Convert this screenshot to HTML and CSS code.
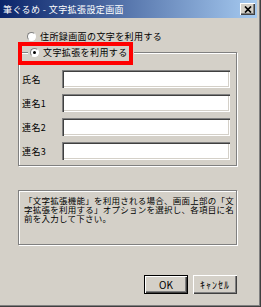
FILE: index.html
```html
<!DOCTYPE html>
<html lang="ja">
<head>
    <meta charset="UTF-8">
    <meta name="viewport" content="width=device-width, initial-scale=1.0">
    <title>筆ぐるめ - 文字拡張設定画面</title>
    <link rel="stylesheet" href="styles.css">
</head>
<body>
    <div class="window">
        <div class="titlebar">
            <span class="title">筆ぐるめ - 文字拡張設定画面</span>
            <span class="close-button">
                <svg width="8" height="7" viewBox="0 0 8 7"><path d="M1 0.5L7 6.5M7 0.5L1 6.5" stroke="#000" stroke-width="1.7" fill="none"/></svg>
            </span>
        </div>
        <div class="content">
            <div class="radio-row"><span class="radio"></span>住所録画面の文字を利用する</div>
            <fieldset class="group">
                <legend class="radio-row legend"><span class="radio checked"></span>文字拡張を利用する</legend>
                <div class="fields">
                    <span class="field-label">氏名</span>
                    <span class="text-box"></span>
                    <span class="field-label">連名1</span>
                    <span class="text-box"></span>
                    <span class="field-label">連名2</span>
                    <span class="text-box"></span>
                    <span class="field-label">連名3</span>
                    <span class="text-box"></span>
                </div>
            </fieldset>
            <div class="note">「文字拡張機能」を利用される場合、画面上部の「文<br>字拡張を利用する」オプションを選択し、各項目に名<br>前を入力して下さい。</div>
            <div class="buttons">
                <button class="dialog-button default-button">OK</button>
                <button class="dialog-button">ｷｬﾝｾﾙ</button>
            </div>
        </div>
        <div class="highlight"></div>
    </div>
</body>
</html>
```

FILE: styles.css
```css
body {
    margin: 0;
    font-family: "Noto Sans CJK JP", sans-serif;
    font-size: 9px;
    letter-spacing: 0.4px;
    color: #000;
}
.window {
    position: relative;
    width: 261px;
    height: 307px;
    box-sizing: border-box;
    padding: 0 4px 4px 0;
    background-color: #d4d0c8;
    box-shadow: inset -1px -1px #404040, inset -2px -2px #808080;
    overflow: hidden;
}
.titlebar {
    height: 18px;
    display: flex;
    align-items: center;
    justify-content: space-between;
    padding: 0 2px 0 3px;
    background: linear-gradient(to right, #0a246a, #a6caf0);
    color: #fff;
}
.title {
    white-space: nowrap;
}
.close-button {
    width: 15px;
    height: 12px;
    display: flex;
    align-items: center;
    justify-content: center;
    background-color: #d4d0c8;
    box-shadow: inset 1px 1px #fff, inset -1px -1px #404040, inset -2px -2px #808080;
}
.content {
    padding: 0 20px 0 18px;
}
.radio-row {
    display: flex;
    align-items: center;
    gap: 4px;
    height: 12px;
    white-space: nowrap;
}
.content > .radio-row {
    margin-top: 12px;
    padding-left: 9px;
}
.radio {
    width: 9px;
    height: 9px;
    box-sizing: border-box;
    border-radius: 50%;
    border: 1px solid;
    border-color: #808080 #fff #fff #808080;
    background-color: #fff;
    display: flex;
    align-items: center;
    justify-content: center;
}
.radio.checked::after {
    content: "";
    width: 3px;
    height: 3px;
    border-radius: 50%;
    background-color: #000;
}
.group {
    margin: 4px 0 0 0;
    padding: 11px 6px 5px 3px;
    min-inline-size: 0;
    border: 1px solid #808080;
    box-shadow: inset 1px 1px #fff, 1px 1px #fff;
}
.legend {
    height: 13px;
    margin-left: 6px;
    padding: 0 6px 0 2px;
    background-color: #d4d0c8;
}
.fields {
    display: grid;
    grid-template-columns: 40px 1fr;
    row-gap: 6px;
    align-items: center;
}
.field-label {
    white-space: nowrap;
}
.text-box {
    height: 18px;
    background-color: #fff;
    box-shadow: inset 1px 1px #808080, inset 2px 2px #404040, inset -1px -1px #fff, inset -2px -2px #d4d0c8;
}
.note {
    margin-top: 24px;
    height: 55px;
    box-sizing: border-box;
    padding: 5px 5px 0 5px;
    border: 1px solid #808080;
    box-shadow: inset 1px 1px #fff, 1px 1px #fff;
    font-size: 8.5px;
    letter-spacing: 0.25px;
    line-height: 9px;
    white-space: nowrap;
}
.buttons {
    display: flex;
    justify-content: flex-end;
    gap: 5px;
    margin-top: 30px;
}
.dialog-button {
    width: 44px;
    height: 19px;
    padding: 0;
    border: none;
    background-color: #d4d0c8;
    font-family: "Noto Sans CJK JP", sans-serif;
    font-size: 10px;
    letter-spacing: 1px;
    color: #000;
    box-shadow: inset 1px 1px #fff, inset -1px -1px #404040, inset -2px -2px #808080;
}
.default-button {
    letter-spacing: 0;
    box-shadow: inset 0 0 0 1px #000, inset 2px 2px #fff, inset -2px -2px #404040, inset -3px -3px #808080;
}
.highlight {
    position: absolute;
    left: 18px;
    top: 42px;
    width: 115px;
    height: 23px;
    box-sizing: border-box;
    border: 4px solid #f00;
}
```
